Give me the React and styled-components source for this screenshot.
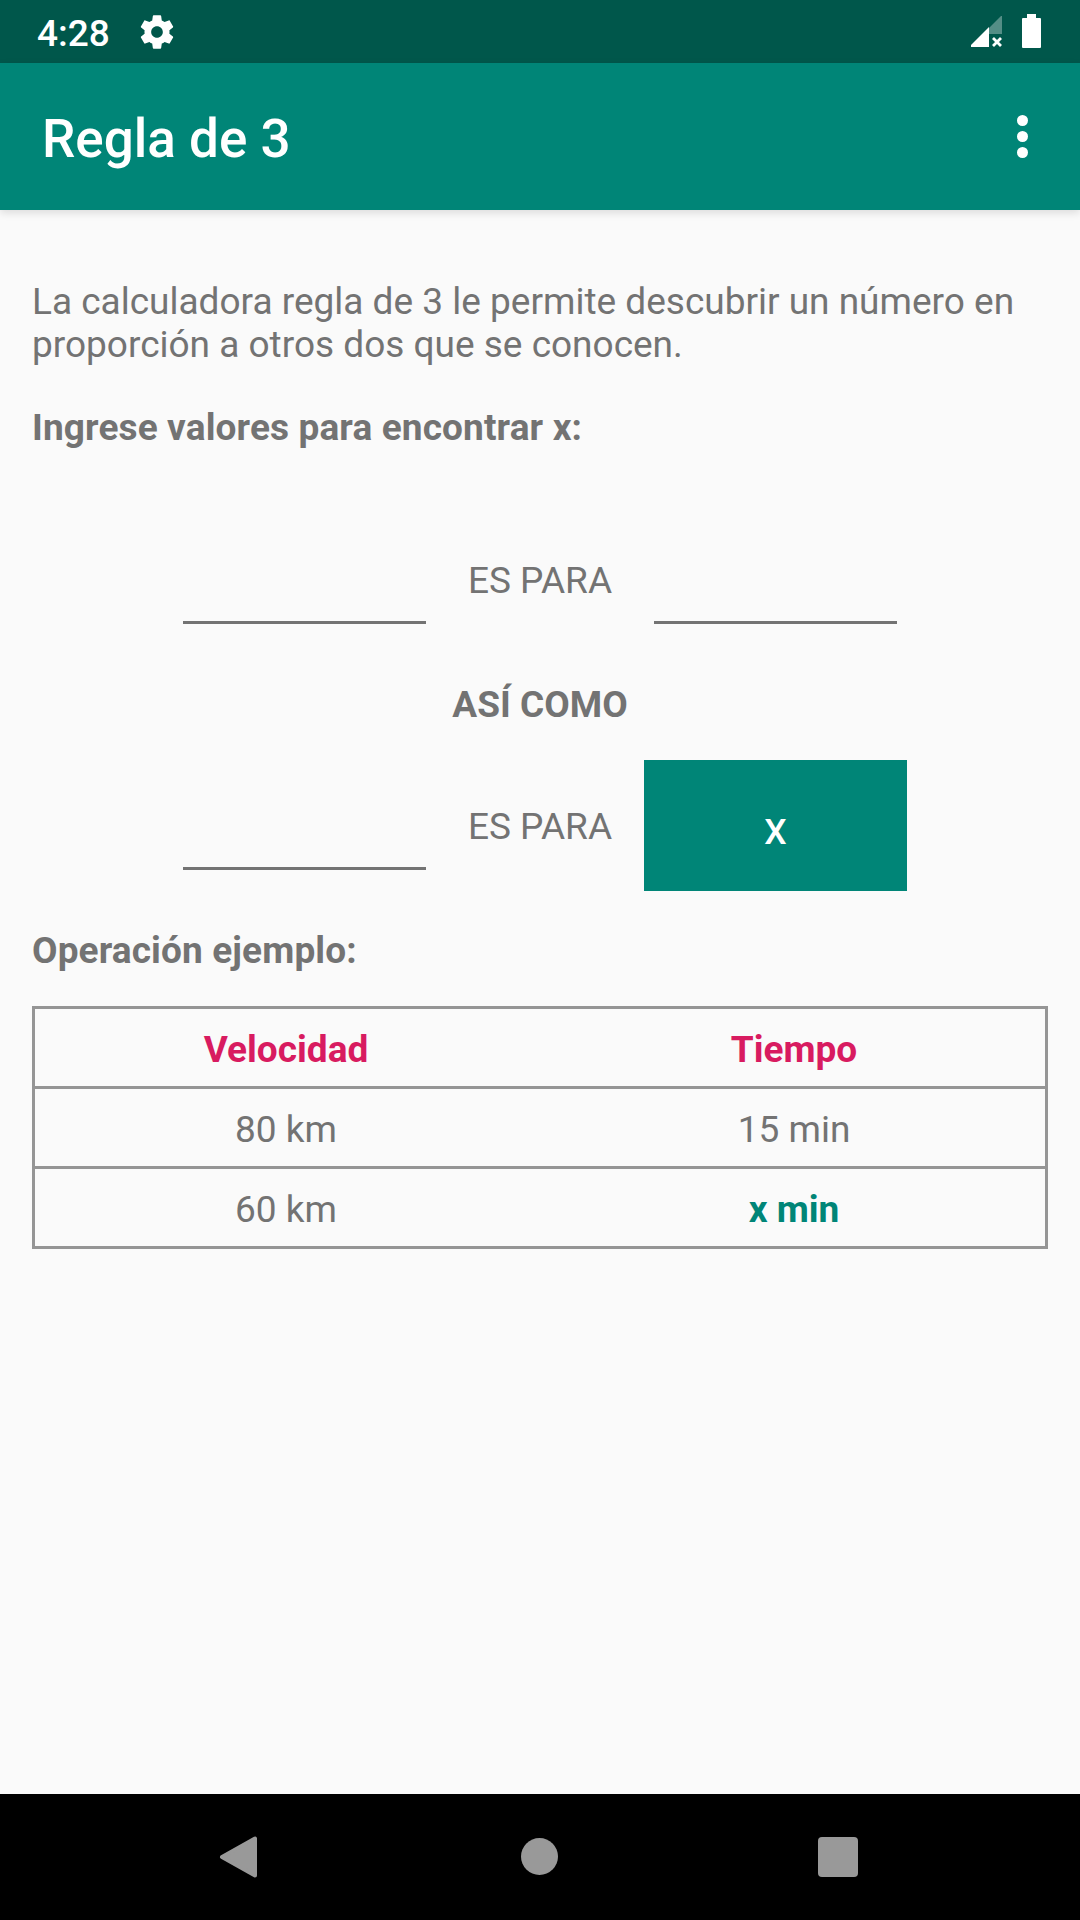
import React, { useState } from 'react';
import styled, { createGlobalStyle } from 'styled-components';

const GlobalStyle = createGlobalStyle`
  * {
    box-sizing: border-box;
  }

  body {
    margin: 0;
    background: #fafafa;
  }
`;

const Screen = styled.div`
  display: flex;
  flex-direction: column;
  width: 1080px;
  height: 1920px;
  overflow: hidden;
  background: #fafafa;
  color: #737373;
  font-family: Roboto, sans-serif;
  font-size: 37px;
  line-height: 43px;
`;

const StatusBar = styled.div`
  display: flex;
  align-items: flex-start;
  height: 63px;
  padding: 12px 39px 0 37px;
  background: #00574b;
  color: #fff;
`;

const Time = styled.div`
  width: 100px;
  font-weight: 500;
`;

const StatusIcons = styled.div`
  display: flex;
  align-items: flex-start;
  gap: 20px;
  margin-left: auto;
`;

const Icon = styled.svg`
  display: block;
  flex: none;
  width: ${({ $w }) => $w}px;
  height: ${({ $h }) => $h}px;
  margin-top: ${({ $top }) => $top || 0}px;
  fill: currentColor;
`;

const AppBar = styled.header`
  display: flex;
  align-items: center;
  justify-content: space-between;
  flex: none;
  height: 147px;
  padding: 0 52px 0 42px;
  background: #008577;
  color: #fff;
  box-shadow: 0 3px 8px rgba(0, 0, 0, 0.12);
`;

const Title = styled.h1`
  margin: 4px 0 0;
  font-size: 53px;
  font-weight: 500;
  line-height: 62px;
`;

const MenuButton = styled.button`
  display: flex;
  padding: 0;
  border: 0;
  background: none;
  color: inherit;
`;

const Content = styled.main`
  display: flex;
  flex-direction: column;
  flex: 1;
  padding: 70px 32px 0;
`;

const Intro = styled.p`
  margin: 0 0 40px;
`;

const Heading = styled.h2`
  margin: 0;
  font-size: inherit;
  font-weight: 700;
  letter-spacing: 0.13px;
`;

const Form = styled.form`
  display: flex;
  flex-direction: column;
  align-items: center;
  padding: 65px 0 38px;
`;

const FormRow = styled.div`
  display: grid;
  grid-template-columns: 263px 208px 263px;
  align-items: center;
  height: 131px;
  text-align: center;
`;

const Field = styled.input`
  justify-self: center;
  width: 243px;
  height: 80px;
  margin-top: 9px;
  padding: 0;
  border: 0;
  border-bottom: 3px solid #737373;
  outline: 0;
  background: transparent;
  color: #333;
  font: inherit;
  text-align: center;
`;

const RowLabel = styled.span`
  margin-top: 2px;
`;

const Middle = styled.div`
  display: flex;
  align-items: center;
  height: 115px;
  padding-top: 4px;
  font-weight: 700;
`;

const SolveButton = styled.button`
  height: 131px;
  padding: 13px 0 0;
  border: 0;
  background: #008577;
  color: #fff;
  font: inherit;
  font-size: 35.5px;
  font-weight: 500;
`;

const Table = styled.div`
  margin-top: 34px;
  border: 3px solid #959595;
`;

const TableRow = styled.div`
  display: grid;
  grid-template-columns: 1fr 1fr;
  height: ${({ $last }) => ($last ? 77 : 80)}px;
  margin: 0 -3px;
  padding-top: 19px;
  border-bottom: ${({ $last }) => ($last ? 0 : 3)}px solid #959595;
  text-align: center;
`;

const Cell = styled.span`
  color: ${({ $color }) => $color || 'inherit'};
  font-weight: ${({ $bold }) => ($bold ? 700 : 400)};
`;

const NavBar = styled.nav`
  display: flex;
  align-items: center;
  justify-content: space-between;
  flex: none;
  height: 126px;
  padding: 0 222px 0 219px;
  background: #000;
  color: #999;
`;

const tableRows = [
  [
    { text: 'Velocidad', color: '#d81b60', bold: true },
    { text: 'Tiempo', color: '#d81b60', bold: true }
  ],
  [{ text: '80 km' }, { text: '15 min' }],
  [{ text: '60 km' }, { text: 'x min', color: '#008577', bold: true }]
];

const App = () => {
  const [values, setValues] = useState({ a: '', b: '', c: '' });
  const [result, setResult] = useState(null);

  const handleChange = (e) => {
    setValues({ ...values, [e.target.name]: e.target.value });
    setResult(null);
  };

  const handleSubmit = (e) => {
    e.preventDefault();
    const x = (Number(values.b) * Number(values.c)) / Number(values.a);
    setResult(Number.isFinite(x) ? x : null);
  };

  return (
    <Screen>
      <GlobalStyle />
      <StatusBar>
        <Time>4:28</Time>
        <Icon viewBox="0 0 24 24" $w={40} $h={40}>
          <path d="M19.43 12.98c.04-.32.07-.64.07-.98s-.03-.66-.07-.98l2.11-1.65c.19-.15.24-.42.12-.64l-2-3.46c-.12-.22-.39-.3-.61-.22l-2.49 1c-.52-.4-1.08-.73-1.69-.98l-.38-2.65C14.46 2.18 14.25 2 14 2h-4c-.25 0-.46.18-.49.42l-.38 2.65c-.61.25-1.17.59-1.69.98l-2.49-1c-.23-.09-.49 0-.61.22l-2 3.46c-.13.22-.07.49.12.64l2.11 1.65c-.04.32-.07.65-.07.98s.03.66.07.98l-2.11 1.65c-.19.15-.24.42-.12.64l2 3.46c.12.22.39.3.61.22l2.49-1c.52.4 1.08.73 1.69.98l.38 2.65c.03.24.24.42.49.42h4c.25 0 .46-.18.49-.42l.38-2.65c.61-.25 1.17-.59 1.69-.98l2.49 1c.23.09.49 0 .61-.22l2-3.46c.12-.22.07-.49-.12-.64l-2.11-1.65zM12 15.5c-1.93 0-3.5-1.57-3.5-3.5s1.57-3.5 3.5-3.5 3.5 1.57 3.5 3.5-1.57 3.5-3.5 3.5z" />
        </Icon>
        <StatusIcons>
          <Icon viewBox="0 0 31 31" $w={31} $h={31} $top={4}>
            <path d="M18 12 30 0h1v18H18z" opacity="0.33" />
            <path d="M0 31v-2l18-18v20z" />
            <path d="m22 22 8 8m0-8-8 8" stroke="currentColor" strokeWidth="2.8" />
          </Icon>
          <Icon viewBox="0 0 19 34" $w={19} $h={34} $top={2}>
            <path d="M5 0h9v4h4a1 1 0 0 1 1 1v28a1 1 0 0 1-1 1H1a1 1 0 0 1-1-1V5a1 1 0 0 1 1-1h4z" />
          </Icon>
        </StatusIcons>
      </StatusBar>

      <AppBar>
        <Title>Regla de 3</Title>
        <MenuButton aria-label="Menú">
          <Icon viewBox="0 0 11 43" $w={11} $h={43}>
            <circle cx="5.5" cy="5.5" r="5.5" />
            <circle cx="5.5" cy="21.5" r="5.5" />
            <circle cx="5.5" cy="37.5" r="5.5" />
          </Icon>
        </MenuButton>
      </AppBar>

      <Content>
        <Intro>
          La calculadora regla de 3 le permite descubrir un número en proporción a otros dos que se
          conocen.
        </Intro>
        <Heading>Ingrese valores para encontrar x:</Heading>

        <Form onSubmit={handleSubmit}>
          <FormRow>
            <Field name="a" value={values.a} onChange={handleChange} />
            <RowLabel>ES PARA</RowLabel>
            <Field name="b" value={values.b} onChange={handleChange} />
          </FormRow>
          <Middle>ASÍ COMO</Middle>
          <FormRow>
            <Field name="c" value={values.c} onChange={handleChange} />
            <RowLabel>ES PARA</RowLabel>
            <SolveButton type="submit">{result === null ? 'X' : result}</SolveButton>
          </FormRow>
        </Form>

        <Heading>Operación ejemplo:</Heading>
        <Table>
          {tableRows.map((row, index) => (
            <TableRow key={index} $last={index === tableRows.length - 1}>
              {row.map((cell) => (
                <Cell key={cell.text} $color={cell.color} $bold={cell.bold}>
                  {cell.text}
                </Cell>
              ))}
            </TableRow>
          ))}
        </Table>
      </Content>

      <NavBar>
        <Icon viewBox="0 0 42 42" $w={42} $h={42}>
          <path d="M3 21 36 2.5v37z" stroke="currentColor" strokeWidth="4" strokeLinejoin="round" />
        </Icon>
        <Icon viewBox="0 0 37 38" $w={37} $h={38}>
          <circle cx="18.5" cy="18.5" r="18.5" />
        </Icon>
        <Icon viewBox="0 0 40 40" $w={40} $h={40}>
          <rect width="40" height="40" rx="4" />
        </Icon>
      </NavBar>
    </Screen>
  );
};

export default App;
